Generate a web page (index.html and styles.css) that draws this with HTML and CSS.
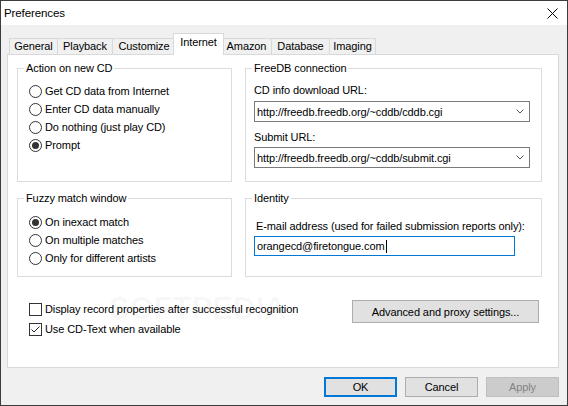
FILE: index.html
```html
<!DOCTYPE html>
<html>
<head>
<meta charset="utf-8">
<title>Preferences</title>
<link rel="stylesheet" href="styles.css">
</head>
<body>
<div class="window">
  <div class="titlebar">
    <span class="title">Preferences</span>
    <svg class="close" width="11" height="11" viewBox="0 0 11 11"><path d="M0.5 0.5L10.5 10.5M10.5 0.5L0.5 10.5" stroke="#000" stroke-width="1" fill="none"/></svg>
  </div>
  <div class="client">
    <div class="tabs">
      <div class="tab t-general">General</div>
      <div class="tab t-playback">Playback</div>
      <div class="tab t-customize">Customize</div>
      <div class="tab t-internet active">Internet</div>
      <div class="tab t-amazon">Amazon</div>
      <div class="tab t-database">Database</div>
      <div class="tab t-imaging">Imaging</div>
    </div>
    <div class="panel">
      <div class="groups">
        <fieldset class="group g-top">
          <legend>Action on new CD</legend>
          <div class="options">
            <div class="radio"><span class="rb"></span>Get CD data from Internet</div>
            <div class="radio"><span class="rb"></span>Enter CD data manually</div>
            <div class="radio"><span class="rb"></span>Do nothing (just play CD)</div>
            <div class="radio"><span class="rb on"></span>Prompt</div>
          </div>
        </fieldset>
        <fieldset class="group g-top">
          <legend>FreeDB connection</legend>
          <div class="fields">
            <div class="field-label">CD info download URL:</div>
            <div class="combo first"><span>http://freedb.freedb.org/~cddb/cddb.cgi</span><svg class="chev" width="8" height="5" viewBox="0 0 8 5"><path d="M0.5 0.5L4 4L7.5 0.5" stroke="#555" stroke-width="1" fill="none"/></svg></div>
            <div class="field-label second">Submit URL:</div>
            <div class="combo"><span>http://freedb.freedb.org/~cddb/submit.cgi</span><svg class="chev" width="8" height="5" viewBox="0 0 8 5"><path d="M0.5 0.5L4 4L7.5 0.5" stroke="#555" stroke-width="1" fill="none"/></svg></div>
          </div>
        </fieldset>
        <fieldset class="group g-bottom">
          <legend>Fuzzy match window</legend>
          <div class="options fuzzy">
            <div class="radio"><span class="rb on"></span>On inexact match</div>
            <div class="radio"><span class="rb"></span>On multiple matches</div>
            <div class="radio"><span class="rb"></span>Only for different artists</div>
          </div>
        </fieldset>
        <fieldset class="group g-bottom">
          <legend>Identity</legend>
          <div class="fields identity">
            <div class="field-label email-label">E-mail address (used for failed submission reports only):</div>
            <div class="textbox"><span>orangecd@firetongue.com</span><span class="caret"></span></div>
          </div>
        </fieldset>
        <div class="extras">
          <div class="checks">
            <div class="check"><span class="cb"></span>Display record properties after successful recognition</div>
            <div class="check"><span class="cb"><svg width="11" height="11" viewBox="0 0 11 11"><path d="M1.5 5.5L4 8L9.5 2.5" stroke="#222" stroke-width="1" fill="none"/></svg></span>Use CD-Text when available</div>
          </div>
          <div class="btn adv">Advanced and proxy settings...</div>
        </div>
      </div>
      <div class="watermark">SOFTPEDIA<span class="reg">®</span></div>
    </div>
    <div class="buttons">
      <div class="btn dlg ok">OK</div>
      <div class="btn dlg">Cancel</div>
      <div class="btn dlg disabled">Apply</div>
    </div>
  </div>
</div>
</body>
</html>
```
FILE: styles.css
```css
body {
  margin: 0;
}

.window {
  width: 568px;
  height: 406px;
  box-sizing: border-box;
  border: 1px solid #3c3c3c;
  background: #f0f0f0;
  display: flex;
  flex-direction: column;
  font-family: "Liberation Sans", Arial, sans-serif;
  font-size: 11px;
  letter-spacing: -0.1px;
  color: #000;
  overflow: hidden;
}

.titlebar {
  height: 24px;
  flex: none;
  background: #fff;
  display: flex;
  align-items: center;
  padding: 0 9px 0 3px;
}

.title {
  flex: 1;
  font-size: 11.5px;
}

.close {
  display: block;
}

.client {
  flex: 1;
  display: flex;
  flex-direction: column;
  padding: 8px 8px 0 6px;
}

.tabs {
  display: flex;
  align-items: flex-end;
  height: 22px;
  padding-left: 2px;
  margin-bottom: -1px;
  position: relative;
  z-index: 1;
}

.tab {
  height: 16px;
  box-sizing: border-box;
  margin-bottom: 1px;
  margin-right: -1px;
  padding: 0;
  border: 1px solid #d9d9d9;
  border-bottom: none;
  background: #f0f0f0;
  line-height: 14px;
  text-align: center;
  white-space: nowrap;
}

.t-general { width: 49px; }
.t-playback { width: 56px; }
.t-customize { width: 64px; }
.t-internet { width: 51px; }
.t-amazon { width: 51px; }
.t-database { width: 59px; }
.t-imaging { width: 47px; }

.tab.active {
  height: 22px;
  margin: 0 -3px 0 -2px;
  padding-top: 1px;
  background: #fff;
  position: relative;
  z-index: 2;
}

.panel {
  position: relative;
  height: 314px;
  box-sizing: border-box;
  background: #fff;
  border: 1px solid #d9d9d9;
  padding: 6px 0 0 9px;
}

.groups {
  display: grid;
  grid-template-columns: 215px 297px;
  column-gap: 13px;
  row-gap: 9px;
}

.group {
  margin: 0;
  padding: 0;
  min-width: 0;
  border: 1px solid #dcdcdc;
  box-sizing: border-box;
}

.g-top {
  height: 121px;
}

.g-bottom {
  height: 86px;
}

.group legend {
  margin-left: 6px;
  padding: 0 2px;
  line-height: 14px;
}

.options {
  padding: 7px 0 0 11px;
}

.options.fuzzy {
  padding-top: 8px;
}

.radio,
.check {
  display: flex;
  align-items: center;
  height: 18px;
  white-space: nowrap;
}

.rb {
  width: 13px;
  height: 13px;
  box-sizing: border-box;
  border: 1px solid #333;
  border-radius: 50%;
  background: #fff;
  margin-right: 3px;
  display: flex;
  align-items: center;
  justify-content: center;
  flex: none;
}

.rb.on::after {
  content: "";
  width: 7px;
  height: 7px;
  border-radius: 50%;
  background: #333;
}

.fields {
  padding: 8px 0 0 8px;
}

.field-label {
  line-height: 14px;
  white-space: nowrap;
}

.field-label.second {
  margin-top: 8px;
}

.combo {
  margin-top: 3px;
  width: 276px;
  height: 21px;
  box-sizing: border-box;
  border: 1px solid #7a7a7a;
  background: #fff;
  display: flex;
  align-items: center;
  padding-left: 2px;
  white-space: nowrap;
}

.combo.first {
  margin-top: 4px;
}

.chev {
  margin-left: auto;
  margin-right: 5px;
  display: block;
}

.fields.identity {
  padding-top: 14px;
}

.email-label {
  padding-left: 2px;
}

.textbox {
  margin-top: 3px;
  width: 261px;
  height: 20px;
  box-sizing: border-box;
  border: 1px solid #0078d7;
  background: #fff;
  display: flex;
  align-items: center;
  padding-left: 2px;
  white-space: nowrap;
}

.caret {
  width: 1px;
  height: 13px;
  background: #000;
  margin-left: 1px;
}

.extras {
  grid-column: 1 / -1;
  display: flex;
  justify-content: space-between;
  align-items: flex-start;
  margin-top: 14px;
}

.checks {
  padding-left: 12px;
  display: flex;
  flex-direction: column;
  gap: 2px;
}

.cb {
  width: 13px;
  height: 13px;
  box-sizing: border-box;
  border: 1px solid #333;
  background: #fff;
  margin-right: 3px;
  flex: none;
  display: flex;
}

.cb svg {
  display: block;
}

.btn {
  box-sizing: border-box;
  border: 1px solid #adadad;
  background: #e1e1e1;
  display: flex;
  align-items: center;
  justify-content: center;
  white-space: nowrap;
}

.btn.adv {
  width: 187px;
  height: 23px;
  margin-right: 3px;
}

.buttons {
  display: flex;
  justify-content: flex-end;
  gap: 8px;
  margin-top: 9px;
}

.btn.dlg {
  width: 73px;
  height: 20px;
}

.btn.ok {
  border: 2px solid #0078d7;
}

.btn.disabled {
  background: #cccccc;
  border-color: #bfbfbf;
  color: #838383;
}

.watermark {
  position: absolute;
  left: 101px;
  top: 236px;
  font-size: 31px;
  font-weight: bold;
  letter-spacing: 0;
  color: rgba(0, 0, 0, 0.035);
  pointer-events: none;
}

.watermark .reg {
  font-size: 10px;
  vertical-align: top;
}
```
